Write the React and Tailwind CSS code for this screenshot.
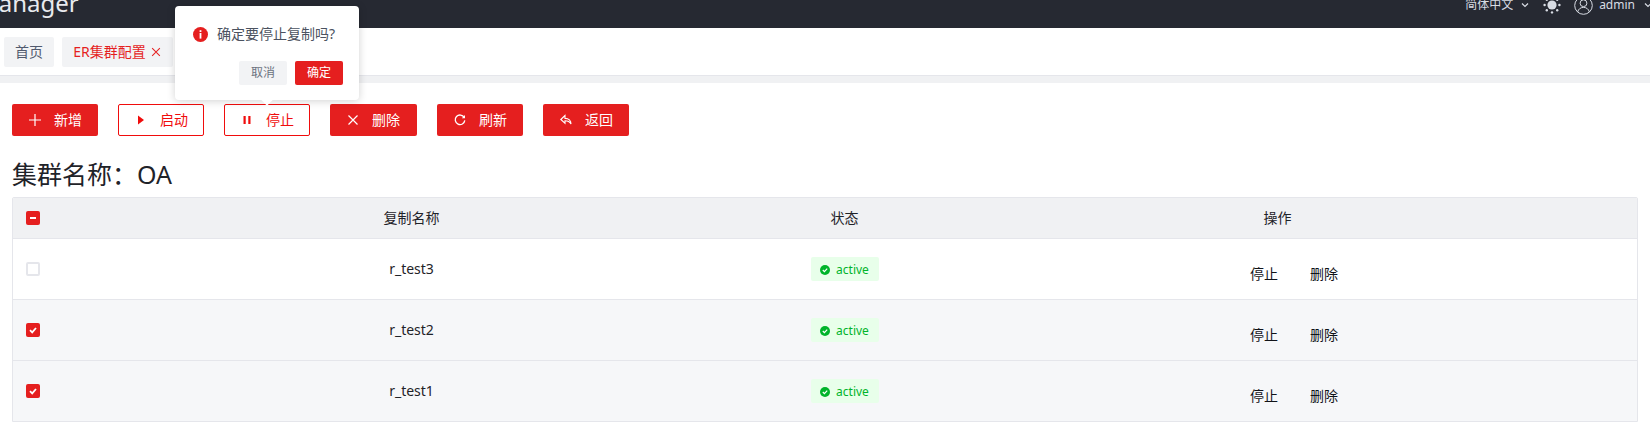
import { useState } from 'react';

const font = { fontFamily: '"Noto Sans", "Noto Sans CJK SC", sans-serif' };

function PlusIcon() {
  return (
    <svg width="14" height="14" viewBox="0 0 14 14" fill="none" stroke="currentColor" strokeWidth="1.2">
      <path d="M7 1v12M1 7h12" />
    </svg>
  );
}

function PlayIcon() {
  return (
    <svg width="14" height="14" viewBox="0 0 14 14" fill="currentColor">
      <path d="M4 2.500l6 4.500-6 4.500z" />
    </svg>
  );
}

function PauseIcon() {
  return (
    <svg width="14" height="14" viewBox="0 0 14 14" fill="currentColor">
      <path d="M3.500 3h2.200v8H3.500zM8.300 3h2.200v8H8.300z" />
    </svg>
  );
}

function CloseIcon({ size = 14 }) {
  return (
    <svg width={size} height={size} viewBox="0 0 14 14" fill="none" stroke="currentColor" strokeWidth="1.2">
      <path d="M2.500 2.500l9 9M11.500 2.500l-9 9" />
    </svg>
  );
}

function RefreshIcon() {
  return (
    <svg width="14" height="14" viewBox="0 0 14 14" fill="none" stroke="currentColor" strokeWidth="1.3">
      <path d="M11.200 4.400A4.800 4.800 0 1 0 11.800 7.400" />
      <path d="M12 2v3.200H8.800z" fill="currentColor" stroke="none" />
    </svg>
  );
}

function BackIcon() {
  return (
    <svg width="14" height="14" viewBox="0 0 14 14" fill="none" stroke="currentColor" strokeWidth="1.1">
      <path d="M6 2.500L1.800 6.500 6 10.200V7.800c2.600 0 4.600.6 6 3.200 0-3.600-2.200-5.600-6-5.600z" />
    </svg>
  );
}

function SunIcon() {
  return (
    <svg width="18" height="18" viewBox="0 0 18 18" fill="currentColor">
      <circle cx="9" cy="9" r="4.600" />
      <circle cx="9" cy="1.600" r="1.200" />
      <circle cx="9" cy="16.400" r="1.200" />
      <circle cx="1.600" cy="9" r="1.200" />
      <circle cx="16.400" cy="9" r="1.200" />
      <circle cx="3.800" cy="3.800" r="1.200" />
      <circle cx="14.200" cy="3.800" r="1.200" />
      <circle cx="3.800" cy="14.200" r="1.200" />
      <circle cx="14.200" cy="14.200" r="1.200" />
    </svg>
  );
}

function UserIcon() {
  return (
    <svg width="19" height="19" viewBox="0 0 19 19" fill="none" stroke="currentColor" strokeWidth="1">
      <circle cx="9.500" cy="9.500" r="8.800" />
      <circle cx="9.500" cy="7.200" r="3.400" />
      <path d="M3.600 16c.8-3 3-4.600 5.900-4.600s5.100 1.600 5.900 4.600" />
    </svg>
  );
}

function Chevron() {
  return (
    <svg width="10" height="10" viewBox="0 0 10 10" fill="none" stroke="currentColor" strokeWidth="1.2">
      <path d="M2 3.500l3 3 3-3" />
    </svg>
  );
}

function ToolButton({ icon, label, outline, width = 'w-[86px]' }) {
  return (
    <button
      className={`flex h-8 ${width} items-center rounded-[2px] text-sm ${
        outline ? 'border border-[#f00c0c] bg-white pl-[15px] text-[#f00c0c]' : 'bg-[#e51f1f] pl-4 text-white'
      }`}
    >
      <span className="flex w-[14px] justify-center">{icon}</span>
      <span className="ml-3">{label}</span>
    </button>
  );
}

function Checkbox({ state }) {
  if (state === 'partial') {
    return (
      <span className="flex h-[14px] w-[14px] items-center justify-center rounded-[2px] bg-[#e51f1f]">
        <span className="h-[2px] w-[6px] bg-white" />
      </span>
    );
  }
  if (state === 'checked') {
    return (
      <span className="flex h-[14px] w-[14px] items-center justify-center rounded-[2px] bg-[#e51f1f]">
        <svg width="10" height="10" viewBox="0 0 10 10" fill="none" stroke="white" strokeWidth="1.8">
          <path d="M2 5.200l2.200 2.200L8 3" />
        </svg>
      </span>
    );
  }
  return <span className="h-[14px] w-[14px] rounded-[2px] border-2 border-[#e5e6eb] bg-white" />;
}

const rows = [
  { name: 'r_test3', state: 'none', bg: 'bg-white', height: 'h-[61px] border-b border-[#e5e6eb]' },
  { name: 'r_test2', state: 'checked', bg: 'bg-[#f6f7f9]', height: 'h-[61px] border-b border-[#e5e6eb]' },
  { name: 'r_test1', state: 'checked', bg: 'bg-[#f6f7f9]', height: 'h-[60px]' },
];

export default function App() {
  const [selected] = useState(rows);

  return (
    <div className="relative h-[430px] w-[1650px] overflow-hidden bg-white" style={font}>
      <header className="flex h-[28px] items-start justify-between overflow-hidden bg-[#262932] text-[#d8dce4]">
        <span className="-ml-[23px] -mt-[12px] text-2xl leading-[30px] text-[#e8eaee]">Manager</span>
        <div className="-mt-[5px] flex items-center text-xs leading-5">
          <span>简体中文</span>
          <span className="ml-[7px]"><Chevron /></span>
          <span className="ml-[13px]"><SunIcon /></span>
          <span className="ml-[13px]"><UserIcon /></span>
          <span className="ml-[6px]">admin</span>
          <span className="-mr-[3px] ml-2"><Chevron /></span>
        </div>
      </header>

      <div className="flex h-[48px] items-start gap-2 border-b border-[#e5e6eb] pl-1 pt-[9px] text-sm">
        <span className="flex h-[30px] w-[50px] items-center justify-center rounded-[2px] bg-[#f2f3f5] text-[#515a6e]">首页</span>
        <span className="flex h-[30px] w-[111px] items-center justify-center gap-1 rounded-[2px] bg-[#f2f3f5] text-[#e51f1f]">
          ER集群配置
          <CloseIcon size={12} />
        </span>
      </div>
      <div className="h-[7px] bg-[#f0f1f3]" />

      <div className="px-3 pt-[21px]">
        <div className="flex gap-5">
          <ToolButton icon={<PlusIcon />} label="新增" />
          <ToolButton icon={<PlayIcon />} label="启动" outline />
          <ToolButton icon={<PauseIcon />} label="停止" outline />
          <ToolButton icon={<CloseIcon />} label="删除" width="w-[87px]" />
          <ToolButton icon={<RefreshIcon />} label="刷新" />
          <ToolButton icon={<BackIcon />} label="返回" />
        </div>

        <h2 className="mt-[22px] h-[39px] text-[25px] leading-[32px] text-[#1f2329]">集群名称：OA</h2>

        <div className="overflow-hidden rounded-t-[2px] border border-[#e5e6eb] text-sm">
          <div className="grid h-[41px] grid-cols-[182px_433px_433px_433px_1fr] items-center border-b border-[#e5e6eb] bg-[#f0f1f3] text-[#1f2329]">
            <div className="flex pl-[13px]"><Checkbox state="partial" /></div>
            <div className="text-center">复制名称</div>
            <div className="text-center">状态</div>
            <div className="text-center">操作</div>
          </div>
          {selected.map((row) => (
            <div
              key={row.name}
              className={`grid grid-cols-[182px_433px_433px_433px_1fr] items-center ${row.height} ${row.bg}`}
            >
              <div className="flex pl-[13px]"><Checkbox state={row.state} /></div>
              <div className="text-center text-[#1f2329]">{row.name}</div>
              <div className="flex justify-center">
                <span className="flex h-6 w-[68px] items-center justify-center gap-[6px] rounded-[2px] bg-[#e8ffea] pt-px text-xs text-[#00b42a]">
                  <svg width="10" height="10" viewBox="0 0 10 10">
                    <circle cx="5" cy="5" r="5" fill="#00b42a" />
                    <path d="M2.800 5l1.600 1.600 2.800-3" fill="none" stroke="white" strokeWidth="1.2" />
                  </svg>
                  active
                </span>
              </div>
              <div className="mt-[10px] flex gap-8 pl-[189px] text-[#111318]">
                <span>停止</span>
                <span>删除</span>
              </div>
            </div>
          ))}
        </div>
      </div>

      <div className="absolute left-[175px] top-[6px] h-[94px] w-[184px] rounded-[4px] bg-white shadow-[0_1px_8px_rgba(0,0,0,0.18)]">
        <div className="flex items-center pl-[18px] pt-[17px] text-sm leading-[22px] text-[#4b5260]">
          <svg width="15" height="15" viewBox="0 0 15 15">
            <circle cx="7.500" cy="7.500" r="7.500" fill="#e51f1f" />
            <rect x="6.600" y="3.200" width="1.800" height="1.800" fill="white" />
            <rect x="6.600" y="6" width="1.800" height="5.600" fill="white" />
          </svg>
          <span className="ml-[9px] whitespace-nowrap">确定要停止复制吗?</span>
        </div>
        <div className="mt-4 flex justify-end gap-2 pr-4 text-xs">
          <button className="h-6 w-12 rounded-[2px] bg-[#f2f3f5] text-[#6b7280]">取消</button>
          <button className="h-6 w-12 rounded-[2px] bg-[#e51f1f] text-white">确定</button>
        </div>
        <span className="absolute -bottom-[4px] left-[88px] h-2 w-2 rotate-45 bg-white" />
      </div>
    </div>
  );
}
